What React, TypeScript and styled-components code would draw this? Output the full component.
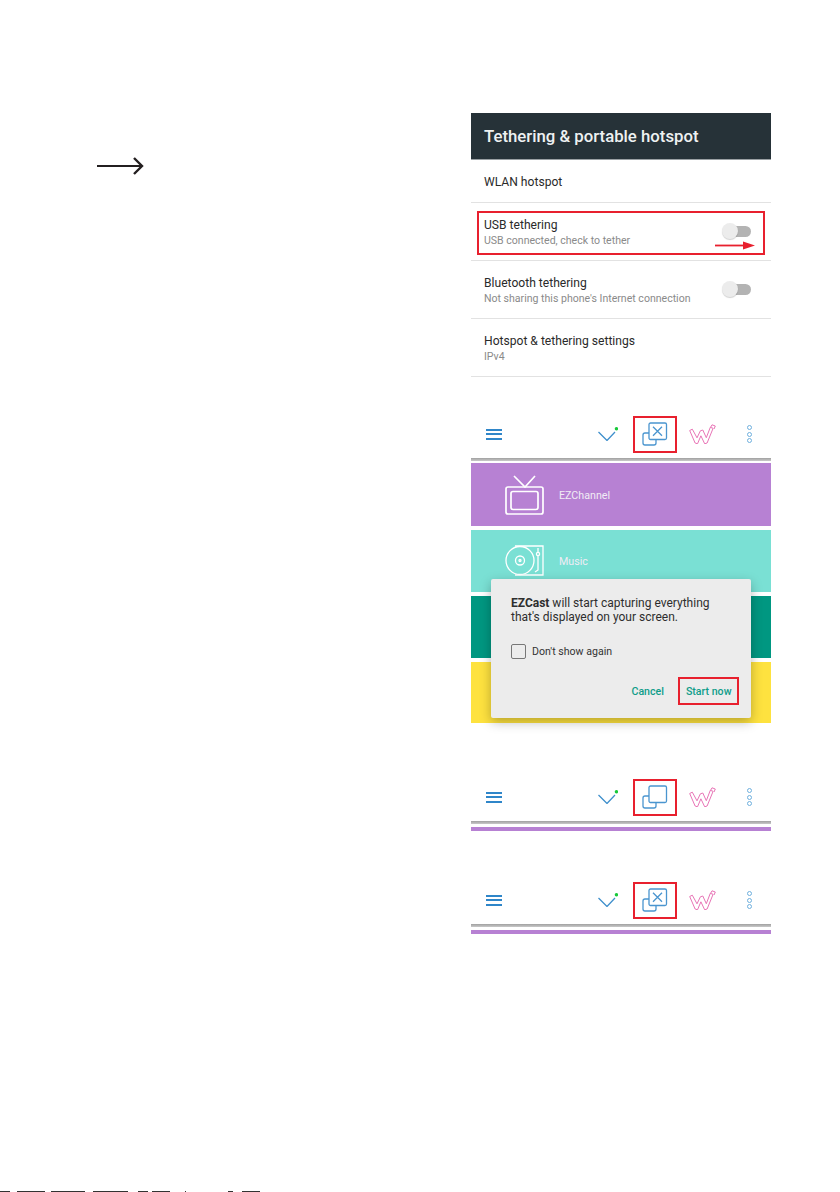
import styled, { createGlobalStyle } from "styled-components";

const GlobalStyle = createGlobalStyle`
  html, body {
    margin: 0;
    padding: 0;
    background: #fff;
  }
`;

const footerDashes = [
  [0, 10],
  [7, 28],
  [6, 34],
  [8, 35],
  [10, 10],
  [4, 18],
  [15, 1],
  [42, 5],
  [9, 18],
];

const CastIcon = ({ stopped }: { stopped: boolean }) => (
  <svg width="26" height="24" viewBox="0 0 26 24" fill="none" stroke="#4a95cf" strokeWidth="1.3">
    <path d="M7 11H3a2 2 0 0 0-2 2v8a2 2 0 0 0 2 2h9a2 2 0 0 0 2-2v-3.5" />
    <rect x="7" y="1" width="17.5" height="16.5" rx="1.5" />
    {stopped && <path d="M11 4.8l9 9M20 4.8l-9 9" strokeWidth="1.3" />}
  </svg>
);

const WandIcon = () => (
  <svg width="27" height="20" viewBox="0 0 27 20" fill="none" stroke="#e874b6" strokeWidth="1" strokeLinejoin="round">
    <path d="M0.7 6.5l2.6-1.3 4.7 8.6 3.4-7 2.4-0.8 3.5 7.7 4-10.4 2.8 1-6 14.7-2.4 0.8-3.8-8-3.4 8-2.4-0.8z" />
    <path d="M21.5 3.5l1.5-2.7 3.3 1.2-1.3 3" />
  </svg>
);

const Toolbar = ({ stopped }: { stopped: boolean }) => (
  <ToolbarWrap>
    <Burger>
      <span />
      <span />
      <span />
    </Burger>
    <ChevronSlot>
      <svg width="20" height="14" viewBox="0 0 20 14" fill="none">
        <path d="M0.5 5l8.5 8.5L17 5" stroke="#3f8fcc" strokeWidth="1.3" />
        <circle cx="18.4" cy="1.8" r="1.7" fill="#18c93a" />
      </svg>
    </ChevronSlot>
    <CastBox>
      <CastIcon stopped={stopped} />
    </CastBox>
    <WandSlot>
      <WandIcon />
    </WandSlot>
    <MoreDots>
      <i />
      <i />
      <i />
    </MoreDots>
  </ToolbarWrap>
);

const Setting = ({
  title,
  sub,
  toggle,
  marked,
}: {
  title: string;
  sub?: string;
  toggle?: boolean;
  marked?: boolean;
}) => (
  <Row $short={!sub}>
    <RowText>
      <RowTitle>{title}</RowTitle>
      {sub && <RowSub>{sub}</RowSub>}
    </RowText>
    {toggle && (
      <Toggle>
        <Thumb />
      </Toggle>
    )}
    {marked && (
      <Marker>
        <svg width="41" height="9" viewBox="0 0 41 9">
          <path d="M0 4.5h30" stroke="#e8202e" strokeWidth="1.8" />
          <path d="M28 0.5l12 4-12 4z" fill="#e8202e" />
        </svg>
      </Marker>
    )}
  </Row>
);

function App() {
  return (
    <Page>
      <GlobalStyle />
      <Columns>
        <LeftColumn>
          <svg width="47" height="18" viewBox="0 0 47 18" fill="none" stroke="#231f20">
            <path d="M0 9h45" strokeWidth="2" />
            <path d="M37 1l8 8-8 8" strokeWidth="2.4" />
          </svg>
        </LeftColumn>
        <Phone>
          <AppBar>Tethering &amp; portable hotspot</AppBar>
          <Setting title="WLAN hotspot" />
          <Setting title="USB tethering" sub="USB connected, check to tether" toggle marked />
          <Setting title="Bluetooth tethering" sub="Not sharing this phone's Internet connection" toggle />
          <Setting title="Hotspot & tethering settings" sub="IPv4" />

          <CastScreen>
            <Toolbar stopped />
            <ToolbarRule />
            <Tile $bg="#b781d3" $height={63} $gap={2}>
              <TileIcon>
                <svg width="40" height="40" viewBox="0 0 40 40" fill="none" stroke="#fff" strokeWidth="1.7">
                  <rect x="1" y="12" width="37" height="27" rx="2" />
                  <rect x="6" y="16.5" width="27" height="18" rx="2" />
                  <path d="M9 1l11 11L30 1" />
                </svg>
              </TileIcon>
              <TileLabel>EZChannel</TileLabel>
            </Tile>
            <Tile $bg="#7ae0d4" $height={62} $gap={4}>
              <TileIcon>
                <svg width="40" height="32" viewBox="0 0 40 32" fill="none" stroke="#fff" strokeWidth="1.3">
                  <path d="M10 1h28v29H10" />
                  <circle cx="15" cy="15.5" r="14" />
                  <circle cx="15" cy="15.5" r="4.5" />
                  <circle cx="15" cy="15.5" r="1" />
                  <circle cx="33" cy="9" r="1.6" />
                  <path d="M33 3v5M33 11v14l-3 2" />
                </svg>
              </TileIcon>
              <TileLabel>Music</TileLabel>
            </Tile>
            <Tile $bg="#009781" $height={62} $gap={4} />
            <Tile $bg="#fee23f" $height={61} $gap={4} />
            <Dialog>
              <DialogText>
                <div>
                  <b>EZCast</b> will start capturing everything
                </div>
                <div>that's displayed on your screen.</div>
              </DialogText>
              <CheckRow>
                <CheckBox />
                Don't show again
              </CheckRow>
              <DialogActions>
                <DialogButton>Cancel</DialogButton>
                <DialogButton $marked>Start now</DialogButton>
              </DialogActions>
            </Dialog>
          </CastScreen>

          <ToolbarGroup $top={50}>
            <Toolbar stopped={false} />
            <ToolbarRule />
            <PurpleStrip />
          </ToolbarGroup>
          <ToolbarGroup $top={45}>
            <Toolbar stopped />
            <ToolbarRule />
            <PurpleStrip />
          </ToolbarGroup>
        </Phone>
      </Columns>
      <CutOffLine>
        {footerDashes.map(([gap, width], i) => (
          <Dash key={i} $gap={gap} $width={width} />
        ))}
      </CutOffLine>
    </Page>
  );
}

const Page = styled.div`
  position: relative;
  width: 840px;
  height: 1192px;
  overflow: hidden;
  font-family: Roboto, "Liberation Sans", sans-serif;
  background: #fff;
`;

const Columns = styled.div`
  display: flex;
  padding-top: 113px;
`;

const LeftColumn = styled.div`
  width: 374px;
  padding: 44px 0 0 97px;
`;

const Phone = styled.div`
  width: 300px;
`;

const AppBar = styled.div`
  height: 46px;
  padding-left: 13px;
  display: flex;
  align-items: center;
  background: #263238;
  border-bottom: 1px solid #9aa0a3;
  color: #eef1f2;
  font-size: 16.75px;
  font-weight: 500;
`;

const Row = styled.div<{ $short: boolean }>`
  position: relative;
  box-sizing: border-box;
  height: ${(p) => (p.$short ? "43px" : "58px")};
  padding: ${(p) => (p.$short ? "2px" : "1px")} 20px 0 13px;
  display: flex;
  align-items: center;
  justify-content: space-between;
  border-bottom: 1px solid #e2e2e2;
`;

const RowText = styled.div`
  display: flex;
  flex-direction: column;
  gap: 2px;
`;

const RowTitle = styled.div`
  color: #2a2a2a;
  font-size: 12.1px;
  line-height: 15px;
`;

const RowSub = styled.div`
  color: #8a8a8a;
  font-size: 10.55px;
  line-height: 12px;
`;

const Toggle = styled.div`
  position: relative;
  width: 21px;
  height: 11px;
  margin-top: -1px;
  border-radius: 6px;
  background: #b3b3b3;
`;

const Thumb = styled.div`
  position: absolute;
  left: -8px;
  top: -3px;
  width: 16px;
  height: 16px;
  border-radius: 50%;
  background: #ececec;
  box-shadow: 0 1px 1px rgba(0, 0, 0, 0.18);
`;

const Marker = styled.div`
  position: absolute;
  left: 6px;
  right: 6px;
  top: 8px;
  height: 44px;
  border: 2px solid #e8202e;
  box-sizing: border-box;

  & > svg {
    position: absolute;
    left: 236px;
    top: 28px;
  }
`;

const CastScreen = styled.div`
  position: relative;
  margin-top: 33px;
`;

const ToolbarGroup = styled.div<{ $top: number }>`
  margin-top: ${(p) => p.$top}px;
`;

const ToolbarWrap = styled.div`
  height: 48px;
  display: flex;
  align-items: center;
  padding-left: 15px;
`;

const Burger = styled.div`
  width: 16px;
  display: flex;
  flex-direction: column;
  gap: 2.5px;

  & > span {
    height: 2px;
    background: #2f86c9;
  }
`;

const ChevronSlot = styled.div`
  margin-left: 96px;
  width: 20px;
  display: flex;
`;

const CastBox = styled.div`
  box-sizing: border-box;
  width: 44px;
  height: 37px;
  margin-left: 15px;
  display: flex;
  align-items: center;
  justify-content: center;
  border: 2px solid #e8202e;
`;

const WandSlot = styled.div`
  margin-left: 12px;
  display: flex;
`;

const MoreDots = styled.div`
  margin-left: 31px;
  display: flex;
  flex-direction: column;
  gap: 1.5px;

  & > i {
    width: 3px;
    height: 3px;
    border: 1px solid #6fb0de;
    border-radius: 50%;
  }
`;

const ToolbarRule = styled.div`
  height: 3px;
  background: linear-gradient(#a0a0a0, #c9c9c9);
`;

const PurpleStrip = styled.div`
  height: 4px;
  margin-top: 3px;
  background: #b781d3;
`;

const Tile = styled.div<{ $bg: string; $height: number; $gap: number }>`
  height: ${(p) => p.$height}px;
  margin-top: ${(p) => p.$gap}px;
  padding-left: 34px;
  display: flex;
  align-items: center;
  gap: 14px;
  background: ${(p) => p.$bg};
`;

const TileIcon = styled.div`
  width: 40px;
  display: flex;
`;

const TileLabel = styled.div`
  padding-top: 1px;
  color: #f1ecf5;
  font-size: 10.7px;
`;

const Dialog = styled.div`
  position: absolute;
  left: 20px;
  top: 169px;
  box-sizing: border-box;
  width: 260px;
  height: 139px;
  padding: 17px 20px 0;
  border-radius: 2px;
  background: #ececec;
  box-shadow: 0 4px 12px rgba(0, 0, 0, 0.28);
`;

const DialogText = styled.div`
  color: #2e2e2e;
  font-size: 12px;
  line-height: 14px;

  & b {
    font-weight: 700;
  }
`;

const CheckRow = styled.div`
  margin-top: 20px;
  display: flex;
  align-items: center;
  gap: 6px;
  color: #333;
  font-size: 10.6px;
`;

const CheckBox = styled.div`
  box-sizing: border-box;
  width: 15px;
  height: 15px;
  border: 1.3px solid #777;
  border-radius: 2px;
`;

const DialogActions = styled.div`
  margin-top: 18px;
  margin-right: -8px;
  display: flex;
  justify-content: flex-end;
  align-items: center;
  gap: 7px;
`;

const DialogButton = styled.div<{ $marked?: boolean }>`
  box-sizing: border-box;
  height: 28px;
  padding: 0 5.5px;
  display: flex;
  align-items: center;
  color: #0f9d8a;
  font-size: 10.6px;
  font-weight: 500;
  border: 2px solid ${(p) => (p.$marked ? "#e8202e" : "transparent")};
`;

const CutOffLine = styled.div`
  position: absolute;
  left: 0;
  bottom: 0;
  height: 1px;
  display: flex;
`;

const Dash = styled.div<{ $gap: number; $width: number }>`
  width: ${(p) => p.$width}px;
  margin-left: ${(p) => p.$gap}px;
  background: #333;
`;

export default App;
